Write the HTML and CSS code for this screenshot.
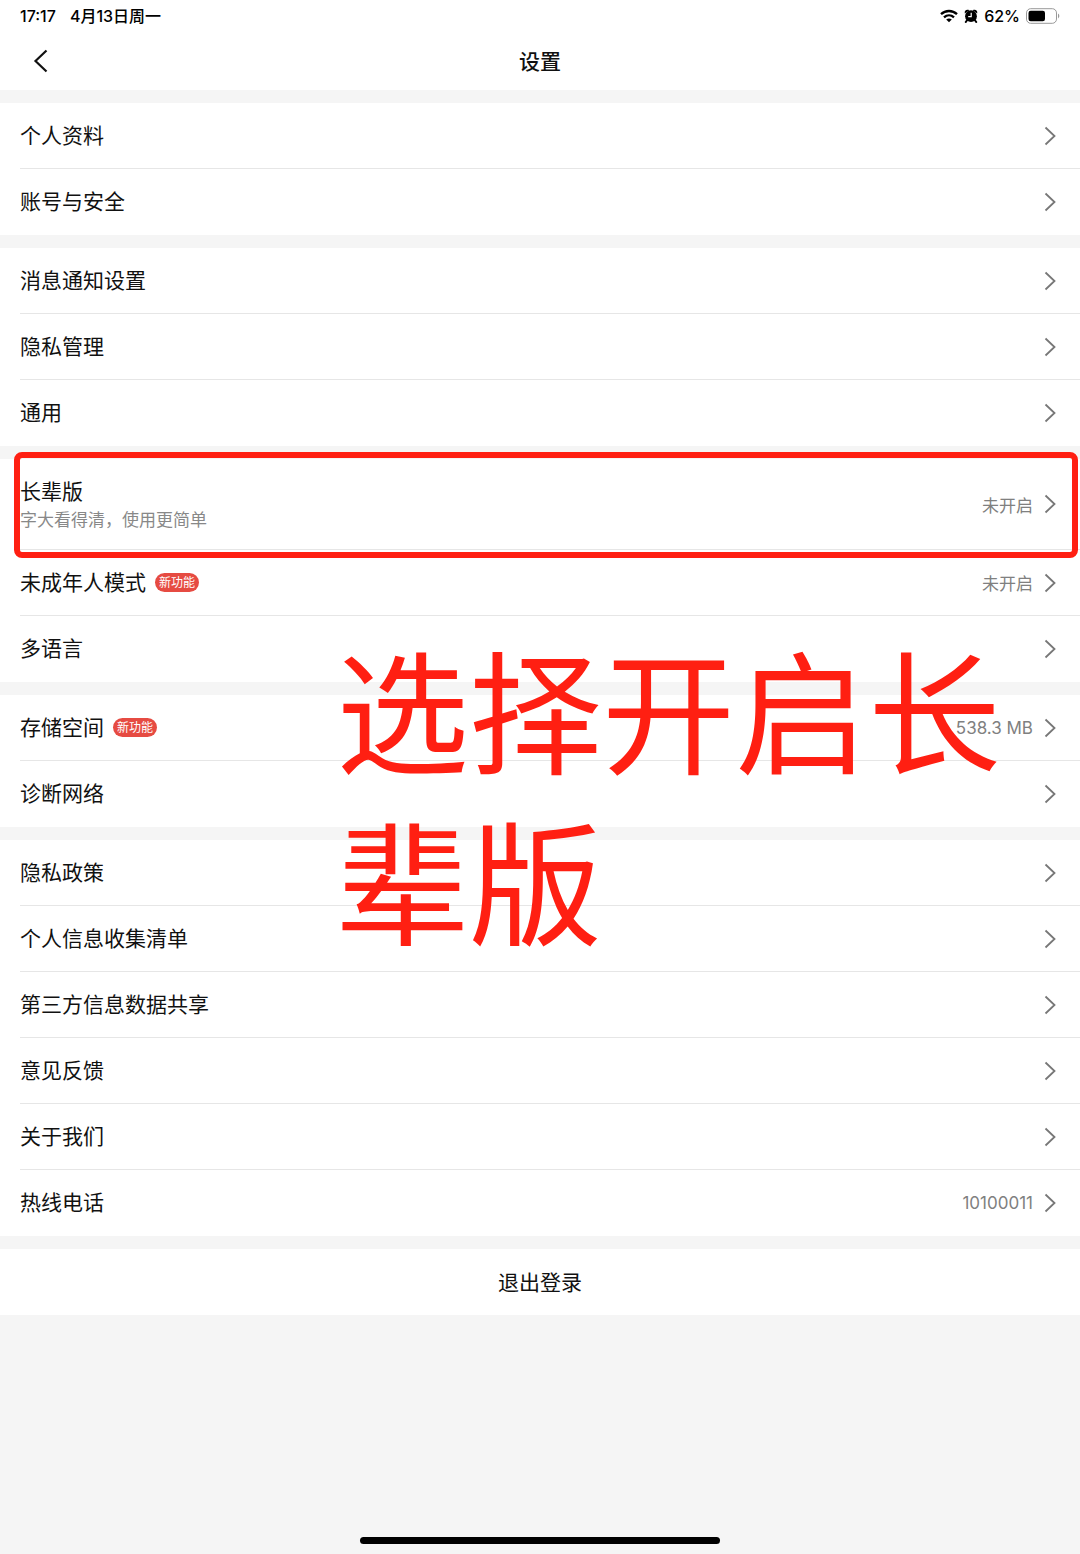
FILE: index.html
```html
<!DOCTYPE html>
<html lang="zh-CN">
<head>
    <meta charset="utf-8">
    <meta name="viewport" content="width=device-width, initial-scale=1">
    <title>设置</title>
    <link rel="stylesheet" href="styles.css">
</head>
<body>
<svg class="symbols" aria-hidden="true">
    <symbol id="arrow" viewBox="0 0 12 20">
        <path d="M1.5 1.5 L10.5 10 L1.5 18.5" fill="none" stroke="currentColor" stroke-width="1.8"/>
    </symbol>
</svg>

<header class="top">
    <div class="status">
        <span>17:17</span>
        <span>4月13日周一</span>
        <div class="status-right">
            <svg width="18" height="14" viewBox="0 0 18 14" aria-hidden="true">
                <g fill="none" stroke="#000" stroke-width="2.3">
                    <path d="M1 5.2 C5.5 0.9 12.5 0.9 17 5.2"/>
                    <path d="M4 8.3 C6.9 5.6 11.1 5.6 14 8.3"/>
                </g>
                <path d="M6.2 10.5 C7.9 9.1 10.1 9.1 11.8 10.5 L9 13.3 Z"/>
            </svg>
            <svg width="14" height="14" viewBox="0 0 14 14" aria-hidden="true">
                <circle cx="7" cy="7.2" r="5.9"/>
                <path d="M0.8 4.4 C0.2 1.2 2.6 0.2 5.4 1.2 Z M13.2 4.4 C13.8 1.2 11.4 0.2 8.6 1.2 Z"/>
                <path d="M3.2 11 L1.8 13 M10.8 11 L12.2 13" stroke="#000" stroke-width="2" stroke-linecap="round"/>
                <path d="M7.2 3.8 V7.6 H4.2" fill="none" stroke="#fff" stroke-width="1.2"/>
            </svg>
            <span>62%</span>
            <svg width="34" height="16" viewBox="0 0 34 16" aria-hidden="true">
                <rect x="0.5" y="0.7" width="30" height="14.6" rx="4.2" fill="none" stroke="#999"/>
                <rect x="2.5" y="2.7" width="16.5" height="10.6" rx="2.2"/>
                <path d="M32 5.6 C33.8 6.4 33.8 9.6 32 10.4 Z" fill="#999"/>
            </svg>
        </div>
    </div>
    <div class="nav">
        <button type="button" class="back" aria-label="返回">
            <svg width="16" height="24" viewBox="0 0 16 24"><path d="M13.5 1.5 L2.5 12 L13.5 22.5" fill="none" stroke="#111" stroke-width="2.2"/></svg>
        </button>
        <h1>设置</h1>
    </div>
</header>

<main class="settings">
    <ul class="group">
        <li><a class="row" href="#"><span class="name">个人资料</span><svg class="arrow"><use href="#arrow"/></svg></a></li>
        <li><a class="row" href="#"><span class="name">账号与安全</span><svg class="arrow"><use href="#arrow"/></svg></a></li>
    </ul>

    <ul class="group">
        <li><a class="row" href="#"><span class="name">消息通知设置</span><svg class="arrow"><use href="#arrow"/></svg></a></li>
        <li><a class="row" href="#"><span class="name">隐私管理</span><svg class="arrow"><use href="#arrow"/></svg></a></li>
        <li><a class="row" href="#"><span class="name">通用</span><svg class="arrow"><use href="#arrow"/></svg></a></li>
    </ul>

    <ul class="group">
        <li class="marked">
            <a class="row row-tall" href="#">
                <span class="name">长辈版<small>字大看得清，使用更简单</small></span>
                <span class="value">未开启</span>
                <svg class="arrow"><use href="#arrow"/></svg>
            </a>
        </li>
        <li><a class="row" href="#"><span class="name">未成年人模式</span><span class="badge">新功能</span><span class="value">未开启</span><svg class="arrow"><use href="#arrow"/></svg></a></li>
        <li><a class="row" href="#"><span class="name">多语言</span><svg class="arrow"><use href="#arrow"/></svg></a></li>
    </ul>

    <ul class="group">
        <li><a class="row" href="#"><span class="name">存储空间</span><span class="badge">新功能</span><span class="value">538.3 MB</span><svg class="arrow"><use href="#arrow"/></svg></a></li>
        <li><a class="row" href="#"><span class="name">诊断网络</span><svg class="arrow"><use href="#arrow"/></svg></a></li>
    </ul>

    <ul class="group">
        <li><a class="row" href="#"><span class="name">隐私政策</span><svg class="arrow"><use href="#arrow"/></svg></a></li>
        <li><a class="row" href="#"><span class="name">个人信息收集清单</span><svg class="arrow"><use href="#arrow"/></svg></a></li>
        <li><a class="row" href="#"><span class="name">第三方信息数据共享</span><svg class="arrow"><use href="#arrow"/></svg></a></li>
        <li><a class="row" href="#"><span class="name">意见反馈</span><svg class="arrow"><use href="#arrow"/></svg></a></li>
        <li><a class="row" href="#"><span class="name">关于我们</span><svg class="arrow"><use href="#arrow"/></svg></a></li>
        <li><a class="row" href="#"><span class="name">热线电话</span><span class="value">10100011</span><svg class="arrow"><use href="#arrow"/></svg></a></li>
    </ul>

    <button type="button" class="logout">退出登录</button>

    <p class="note">选择开启长辈版</p>
</main>

<div class="home-bar"></div>
</body>
</html>
```
FILE: styles.css
```css
* {
    box-sizing: border-box;
}

body {
    margin: 0;
    min-height: 100vh;
    display: flex;
    flex-direction: column;
    background-color: #f5f5f5;
    color: #111;
    font-family: Inter, "Noto Sans CJK SC", sans-serif;
    font-size: 21px;
}

.symbols {
    display: none;
}

.top {
    background-color: #fff;
}

.status {
    display: flex;
    align-items: center;
    gap: 14px;
    height: 32px;
    padding: 0 20px;
    font-size: 16px;
    font-weight: 500;
    line-height: 20px;
    color: #000;
}

.status-right {
    display: flex;
    align-items: center;
    gap: 6px;
    margin-left: auto;
}

.nav {
    display: grid;
    grid-template-columns: 1fr auto 1fr;
    align-items: center;
    height: 58px;
    padding: 0 33px;
}

.nav h1 {
    margin: 0;
    padding-bottom: 2px;
    font-size: 21px;
    font-weight: 500;
}

.back {
    justify-self: start;
    display: flex;
    padding: 0;
    border: 0;
    background: none;
}

.settings {
    position: relative;
    display: flex;
    flex-direction: column;
    gap: 13px;
    padding-top: 13px;
}

.group {
    margin: 0;
    padding: 0;
    list-style: none;
    background-color: #fff;
}

.group li {
    padding-left: 20px;
}

.row {
    display: flex;
    align-items: center;
    height: 66px;
    padding-right: 24px;
    border-bottom: 1px solid #e6e6e6;
    color: inherit;
    text-decoration: none;
}

.group li:last-child .row {
    border-bottom-color: transparent;
}

.name {
    padding-bottom: 3px;
}

.row-tall {
    height: 91px;
}

.row-tall .name {
    padding-bottom: 0;
    line-height: 32px;
}

.name small {
    display: block;
    font-size: 17px;
    line-height: 24px;
    color: #888;
}

.badge {
    margin-left: 9px;
    padding: 0 4px;
    border-radius: 10px;
    background-color: #e64b42;
    color: #fff;
    font-size: 12px;
    line-height: 19px;
}

.value {
    margin-left: auto;
    font-size: 17px;
    color: #808080;
}

.arrow {
    width: 12px;
    height: 20px;
    margin-left: auto;
    color: #777;
}

.value + .arrow {
    margin-left: 11px;
}

.logout {
    height: 66px;
    padding-bottom: 4px;
    border: 0;
    background-color: #fff;
    color: inherit;
    font: inherit;
}

/* red frame round the highlighted row */
.marked {
    position: relative;
}

.marked::after {
    content: "";
    position: absolute;
    top: -7px;
    right: 2px;
    bottom: -8px;
    left: 14px;
    border: 6px solid #ff1f12;
    border-radius: 8px;
    pointer-events: none;
}

.note {
    position: absolute;
    top: 531px;
    left: 336px;
    width: 5em;
    margin: 0;
    font-family: "Noto Sans CJK SC", sans-serif;
    font-size: 133px;
    line-height: 171px;
    color: #ff1f12;
    pointer-events: none;
}

.home-bar {
    width: 33.33%;
    height: 7px;
    margin: auto auto 10px;
    border-radius: 4px;
    background-color: #000;
}
```
